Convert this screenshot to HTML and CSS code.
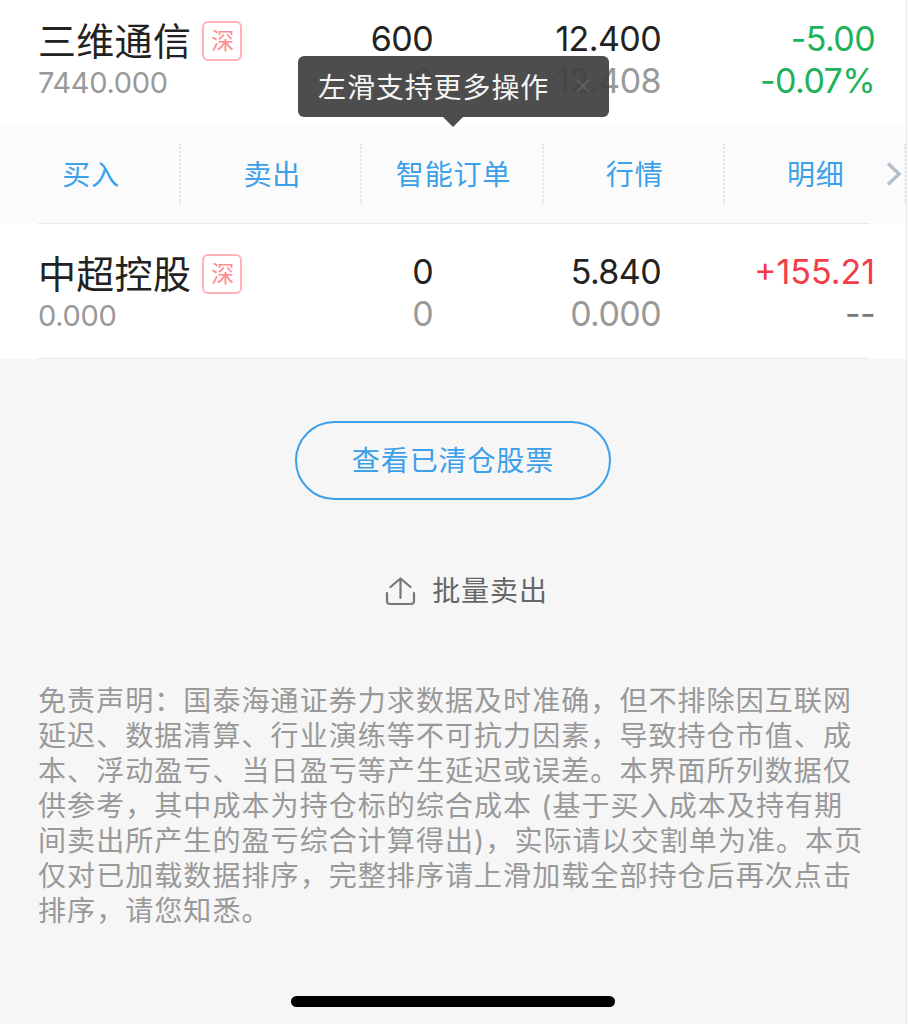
FILE: index.html
```html
<!DOCTYPE html>
<html lang="zh-CN">
<head>
    <meta charset="UTF-8">
    <title>持仓</title>
    <link rel="stylesheet" href="styles.css">
</head>
<body>
    <div class="page">
        <div class="stock first">
            <div class="name-col">
                <div class="name">三维通信<span class="tag">深</span></div>
                <div class="value">7440.000</div>
            </div>
            <div class="col amount"><div>600</div><div class="sub">0</div></div>
            <div class="col price"><div>12.400</div><div class="sub">12.408</div></div>
            <div class="col profit green"><div>-5.00</div><div>-0.07%</div></div>
            <div class="tooltip">
                <span>左滑支持更多操作</span>
                <svg class="close" width="14" height="14" viewBox="0 0 14 14"><path d="M1 1L13 13M13 1L1 13"/></svg>
            </div>
        </div>

        <div class="actions">
            <a class="action">买入</a>
            <a class="action">卖出</a>
            <a class="action">智能订单</a>
            <a class="action">行情</a>
            <a class="action">明细</a>
            <svg class="next" width="16" height="26" viewBox="0 0 16 26"><path d="M2 2.5L13 13L2 23.5"/></svg>
        </div>

        <div class="stock second">
            <div class="name-col">
                <div class="name">中超控股<span class="tag">深</span></div>
                <div class="value">0.000</div>
            </div>
            <div class="col amount"><div>0</div><div class="sub">0</div></div>
            <div class="col price"><div>5.840</div><div class="sub">0.000</div></div>
            <div class="col profit"><div class="red">+155.21</div><div class="empty">--</div></div>
        </div>

        <div class="footer">
            <button class="cleared-btn">查看已清仓股票</button>
            <div class="batch">
                <svg width="32" height="30" viewBox="0 0 32 30"><path d="M2 17V25Q2 28 5 28H26Q29 28 29 25V17M15.5 22V2.5M5.5 11L15.5 2.5L25.5 11"/></svg>
                <span>批量卖出</span>
            </div>
            <p class="disclaimer">
                免责声明：国泰海通证券力求数据及时准确，但不排除因互联网<br>
                延迟、数据清算、行业演练等不可抗力因素，导致持仓市值、成<br>
                本、浮动盈亏、当日盈亏等产生延迟或误差。本界面所列数据仅<br>
                供参考，其中成本为持仓标的综合成本 (基于买入成本及持有期<br>
                间卖出所产生的盈亏综合计算得出)，实际请以交割单为准。本页<br>
                仅对已加载数据排序，完整排序请上滑加载全部持仓后再次点击<br>
                排序，请您知悉。
            </p>
            <div class="home-bar"></div>
        </div>
    </div>
</body>
</html>
```

FILE: styles.css
```css
* {
    box-sizing: border-box;
}

body {
    margin: 0;
    background: #fafafa;
    font-family: Inter, "Noto Sans CJK SC", sans-serif;
    color: #222;
}

.page {
    width: 907px;
    height: 1024px;
    display: flex;
    flex-direction: column;
    overflow: hidden;
    background: #f6f6f6;
    border-right: 1px solid #ebebeb;
}

.stock {
    position: relative;
    display: grid;
    grid-template-columns: 240px 155px 228px 214px;
    padding-left: 38px;
    background: #fff;
}

.first {
    z-index: 1;
    height: 125px;
    padding-top: 18px;
}

.second {
    height: 135px;
    padding-top: 27px;
}

/* inset divider under a row */
.second::after,
.actions::after {
    content: "";
    position: absolute;
    left: 38px;
    right: 37px;
    bottom: 0;
    height: 1px;
    background: #e9e9e9;
}

.name {
    display: flex;
    align-items: center;
    height: 46px;
    font-size: 38px;
    line-height: 40px;
    padding-bottom: 1px;
    letter-spacing: 0.3px;
    white-space: nowrap;
}

.tag {
    width: 40px;
    height: 40px;
    margin: 1px 0 0 11px;
    border: 2px solid #ffb3b8;
    border-radius: 6px;
    color: #ff8a92;
    font-size: 23px;
    line-height: 37px;
    letter-spacing: -1px;
    text-align: center;
}

.value {
    height: 38px;
    line-height: 38px;
    font-size: 29px;
    letter-spacing: -0.3px;
    color: #999;
}

.col {
    font-size: 34px;
    line-height: 42px;
    letter-spacing: -0.6px;
    text-align: right;
}

.sub {
    color: #999;
}

.green {
    color: #20b25a;
}

.red {
    color: #f23c48;
    letter-spacing: 0;
}

.empty {
    color: #777;
}

.tooltip {
    position: absolute;
    left: 298px;
    top: 56px;
    width: 311px;
    height: 61px;
    padding: 0 19px 2px 20px;
    display: flex;
    align-items: center;
    justify-content: space-between;
    border-radius: 6px;
    background: rgba(64, 64, 64, 0.93);
    color: #f5f5f5;
    font-size: 28px;
    letter-spacing: 0.9px;
}

.tooltip::after {
    content: "";
    position: absolute;
    left: 145px;
    top: 61px;
    border: 10.5px solid transparent;
    border-top-color: #4d4d4d;
    border-bottom: 0;
}

.close {
    fill: none;
    stroke: #666;
    stroke-width: 1.2;
}

.actions {
    position: relative;
    height: 99px;
    display: flex;
    align-items: flex-start;
    padding-top: 19px;
    background: #fbfbfb;
}

.action {
    flex: none;
    width: 181.2px;
    height: 60px;
    padding-left: 3px;
    line-height: 62px;
    border-right: 2px dotted #e4e4e4;
    color: #3da0ea;
    font-size: 28px;
    letter-spacing: 0.8px;
    text-align: center;
}

.next {
    position: absolute;
    right: 4px;
    top: 36px;
    fill: none;
    stroke: #b5bfcc;
    stroke-width: 3.5;
}

.footer {
    flex: 1;
    display: flex;
    flex-direction: column;
    align-items: center;
    padding-top: 62px;
}

.cleared-btn {
    width: 316px;
    height: 79px;
    padding: 0 0 4px;
    border: 2px solid #3da0ea;
    border-radius: 40px;
    background: none;
    color: #3da0ea;
    font-family: inherit;
    font-size: 28px;
    letter-spacing: 0.9px;
}

.batch {
    display: flex;
    align-items: center;
    gap: 15px;
    height: 42px;
    margin-top: 70px;
    padding-left: 27px;
    color: #666;
    font-size: 28px;
    letter-spacing: 0.9px;
}

.batch span {
    padding-bottom: 4px;
}

.batch svg {
    fill: none;
    stroke: #777;
    stroke-width: 2.2;
    stroke-linejoin: round;
    stroke-linecap: round;
}

.disclaimer {
    align-self: stretch;
    margin: 72px 0 0;
    padding-left: 38px;
    color: #999;
    font-size: 28px;
    line-height: 35px;
    letter-spacing: 1.07px;
    white-space: nowrap;
}

.home-bar {
    width: 324px;
    height: 11px;
    margin-top: auto;
    margin-bottom: 17px;
    border-radius: 6px;
    background: #000;
}
```
